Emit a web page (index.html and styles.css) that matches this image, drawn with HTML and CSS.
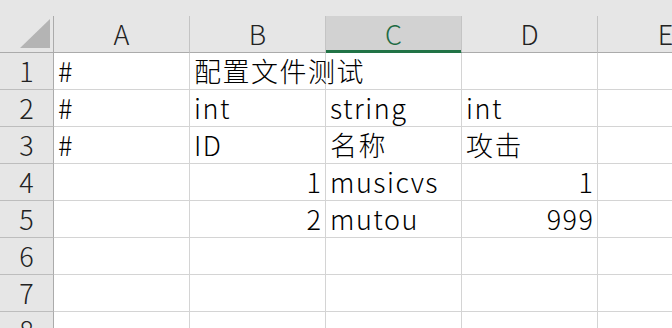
FILE: index.html
```html
<!DOCTYPE html>
<html lang="zh-CN">
<head>
    <meta charset="UTF-8">
    <title>Sheet1</title>
    <link rel="stylesheet" href="styles.css">
</head>
<body>

<div class="sheet">
    <div class="topbar"></div>

    <div class="grid">
        <div class="corner">
            <svg width="30" height="29" viewBox="0 0 30 29"><polygon points="0,29 30,0 30,29" fill="#b4b4b4"/></svg>
        </div>
        <div class="colhead">A</div>
        <div class="colhead">B</div>
        <div class="colhead selected">C</div>
        <div class="colhead">D</div>
        <div class="colhead">E</div>

        <div class="rowhead">1</div>
        <div class="cell">#</div>
        <div class="cell">配置文件测试</div>
        <div class="cell"></div>
        <div class="cell"></div>
        <div class="cell"></div>

        <div class="rowhead">2</div>
        <div class="cell">#</div>
        <div class="cell">int</div>
        <div class="cell">string</div>
        <div class="cell">int</div>
        <div class="cell"></div>

        <div class="rowhead">3</div>
        <div class="cell">#</div>
        <div class="cell">ID</div>
        <div class="cell">名称</div>
        <div class="cell">攻击</div>
        <div class="cell"></div>

        <div class="rowhead">4</div>
        <div class="cell"></div>
        <div class="cell num">1</div>
        <div class="cell">musicvs</div>
        <div class="cell num">1</div>
        <div class="cell"></div>

        <div class="rowhead">5</div>
        <div class="cell"></div>
        <div class="cell num">2</div>
        <div class="cell">mutou</div>
        <div class="cell num">999</div>
        <div class="cell"></div>

        <div class="rowhead">6</div>
        <div class="cell"></div>
        <div class="cell"></div>
        <div class="cell"></div>
        <div class="cell"></div>
        <div class="cell"></div>

        <div class="rowhead">7</div>
        <div class="cell"></div>
        <div class="cell"></div>
        <div class="cell"></div>
        <div class="cell"></div>
        <div class="cell"></div>

        <div class="rowhead">8</div>
        <div class="cell"></div>
        <div class="cell"></div>
        <div class="cell"></div>
        <div class="cell"></div>
        <div class="cell"></div>
    </div>
</div>

</body>
</html>
```

FILE: styles.css
```css
html, body {
    margin: 0;
    padding: 0;
    background-color: #ffffff;
    overflow: hidden;
}
.sheet {
    width: 672px;
    height: 328px;
    overflow: hidden;
    font-family: "Noto Sans CJK SC", sans-serif;
    font-weight: 300;
    color: #000;
}
.topbar {
    height: 16px;
    background-color: #e6e6e6;
}
.grid {
    display: grid;
    grid-template-columns: 54px 136px 136px 136px 136px 136px;
    grid-auto-rows: 37px;
}
.grid > div {
    box-sizing: border-box;
    border-right: 1px solid #d4d4d4;
    border-bottom: 1px solid #d4d4d4;
    line-height: 36px;
    white-space: nowrap;
    overflow: visible;
}
.corner {
    background-color: #e6e6e6;
    display: flex;
    justify-content: flex-end;
    align-items: flex-end;
    padding: 0 3px 4px 0;
}
.grid > .corner {
    border-right-color: #ababab;
    border-bottom-color: #ababab;
}
.corner svg {
    display: block;
}
.grid > .colhead {
    background-color: #e6e6e6;
    border-right-color: #c4c4c4;
    border-bottom-color: #ababab;
    text-align: center;
    font-size: 27px;
    color: #222;
}
.grid > .colhead.selected {
    background-color: #d2d2d2;
    color: #1e6b44;
    border-bottom-color: #217346;
    box-shadow: inset 0 -2px 0 #217346;
}
.grid > .rowhead {
    background-color: #e6e6e6;
    border-right-color: #ababab;
    border-bottom-color: #bdbdbd;
    text-align: center;
    font-size: 27px;
    color: #222;
}
.cell {
    font-size: 27px;
    letter-spacing: 1.5px;
    padding: 0 4px;
    position: relative;
    z-index: 1;
}
.cell.num {
    text-align: right;
    padding-right: 2.5px;
}
```
